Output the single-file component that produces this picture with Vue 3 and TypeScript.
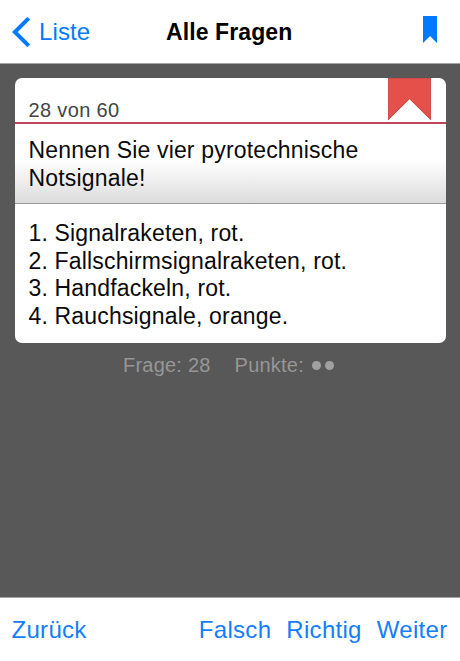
<script setup lang="ts">
import { ref } from 'vue'

interface Action {
  label: string
  name: string
}

const current = ref<number>(28)
const total = 60
const points = 2
const question: string[] = ['Nennen Sie vier pyrotechnische', 'Notsignale!']
const answers: string[] = [
  'Signalraketen, rot.',
  'Fallschirmsignalraketen, rot.',
  'Handfackeln, rot.',
  'Rauchsignale, orange.',
]
const ratings: Action[] = [
  { label: 'Falsch', name: 'falsch' },
  { label: 'Richtig', name: 'richtig' },
  { label: 'Weiter', name: 'weiter' },
]
</script>

<template>
  <div class="screen">
    <header class="navbar">
      <a class="back">
        <svg class="chevron" width="18" height="30" viewBox="0 0 18 30">
          <path d="M16.7 1.3 L2.8 15 L16.7 28.7" fill="none" stroke="#007aff" stroke-width="4" />
        </svg>
        <span class="back-label">Liste</span>
      </a>
      <h1 class="title">Alle Fragen</h1>
      <svg class="flag" width="14" height="27" viewBox="0 0 14 27">
        <path d="M0 0 H14 V27 L7 20 L0 27 Z" fill="#007aff" />
      </svg>
    </header>

    <main class="content">
      <article class="card">
        <div class="card-head">
          <span class="counter">{{ current }} von {{ total }}</span>
          <svg class="ribbon" width="43" height="43" viewBox="0 0 43 43">
            <path d="M0 0 H43 V42.4 L21.5 21.2 L0 42.4 Z" fill="#e5504b" />
            <path d="M0.5 0.5 H42.5 V41.2 L21.5 20.5 L0.5 41.2 Z" fill="none" stroke="#d24b46" stroke-width="1" />
          </svg>
        </div>
        <div class="question">
          <div v-for="line in question" :key="line"><span class="question-line">{{ line }}</span></div>
        </div>
        <div class="answers">
          <div v-for="(answer, i) in answers" :key="answer">
            <span class="answer">{{ i + 1 }}. {{ answer }}</span>
          </div>
        </div>
      </article>
      <div class="meta">
        <span class="meta-id">Frage: {{ current }}</span>
        <span class="meta-points">Punkte:</span>
        <span class="dots"><i v-for="n in points" :key="n" class="dot"></i></span>
      </div>
    </main>

    <footer class="toolbar">
      <a class="zurueck">Zurück</a>
      <div class="ratings">
        <a v-for="r in ratings" :key="r.name" :class="r.name">{{ r.label }}</a>
      </div>
    </footer>
  </div>
</template>

<style>
body {
  margin: 0;
}
</style>

<style scoped>
.screen {
  width: 460px;
  height: 661px;
  display: flex;
  flex-direction: column;
  background: #585858;
  font-family: "Liberation Sans", Arial, sans-serif;
  overflow: hidden;
}
.navbar {
  box-sizing: border-box;
  height: 64px;
  flex: none;
  display: grid;
  grid-template-columns: 154px 1fr 154px;
  align-items: start;
  background: #fff;
  border-bottom: 1px solid #a4a4a4;
  color: #007aff;
}
.back {
  display: flex;
  padding: 17px 0 0 12px;
  gap: 9px;
}
.back-label {
  font-size: 24px;
  line-height: 30px;
  letter-spacing: 0.1px;
}
.title {
  margin: 17px 0 0 12px;
  font-size: 23px;
  line-height: 30px;
  letter-spacing: 0.1px;
  font-weight: bold;
  color: #000;
  white-space: nowrap;
}
.flag {
  justify-self: end;
  margin: 16px 23px 0 0;
}
.content {
  flex: 1;
  padding: 14px 14px 0 14.5px;
}
.card {
  height: 265px;
  border-radius: 7px;
  background: #fff;
  overflow: hidden;
}
.card-head {
  box-sizing: border-box;
  height: 46px;
  display: flex;
  justify-content: space-between;
  padding: 0 15px 0 14px;
  border-bottom: 2px solid #c0445a;
}
.counter {
  margin-top: 19px;
  font-size: 20px;
  line-height: 26px;
  letter-spacing: 0.35px;
  color: #444;
}
.question {
  box-sizing: border-box;
  height: 80px;
  padding: 13px 14px 0;
  border-bottom: 1px solid #999;
  background: linear-gradient(#fff 0%, #fff 45%, #dcdcdc 100%);
}
.question,
.answers {
  font-size: 23px;
  line-height: 27.5px;
  letter-spacing: 0.17px;
  color: #0a0a0a;
  white-space: nowrap;
}
.answers {
  padding: 16.4px 14px 0;
}
.meta {
  display: flex;
  align-items: center;
  height: 26px;
  margin-top: 9px;
  padding-left: 108.5px;
  font-size: 20px;
  letter-spacing: 0.22px;
  color: #969696;
}
.meta-points {
  margin-left: 24px;
}
.dots {
  display: flex;
  gap: 4px;
  margin-left: 8.5px;
}
.dot {
  width: 9px;
  height: 9px;
  border-radius: 50%;
  background: #a0a0a0;
}
.toolbar {
  box-sizing: border-box;
  height: 64px;
  flex: none;
  display: flex;
  justify-content: space-between;
  padding: 17px 12.5px 0 11.5px;
  border-top: 1px solid #a4a4a4;
  background: #fff;
  font-size: 24px;
  line-height: 30px;
  letter-spacing: 0.3px;
  color: #147efb;
}
.ratings {
  display: flex;
  gap: 15px;
}
</style>
